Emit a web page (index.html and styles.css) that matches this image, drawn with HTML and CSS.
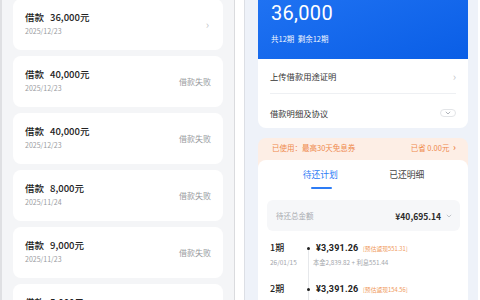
FILE: index.html
```html
<!DOCTYPE html>
<html lang="zh-CN">
<head>
    <meta charset="UTF-8">
    <meta name="viewport" content="width=device-width, initial-scale=1.0">
    <title>借款记录</title>
    <link rel="stylesheet" href="styles.css">
</head>
<body>
    <div class="screen list-screen">
        <div class="loan-list">
            <div class="loan-card">
                <div class="loan-info">
                    <div class="loan-title"><span>借款</span><span>36,000元</span></div>
                    <div class="loan-date">2025/12/23</div>
                </div>
                <span class="chevron">›</span>
            </div>
            <div class="loan-card">
                <div class="loan-info">
                    <div class="loan-title"><span>借款</span><span>40,000元</span></div>
                    <div class="loan-date">2025/12/23</div>
                </div>
                <span class="loan-status">借款失败</span>
            </div>
            <div class="loan-card">
                <div class="loan-info">
                    <div class="loan-title"><span>借款</span><span>40,000元</span></div>
                    <div class="loan-date">2025/12/23</div>
                </div>
                <span class="loan-status">借款失败</span>
            </div>
            <div class="loan-card">
                <div class="loan-info">
                    <div class="loan-title"><span>借款</span><span>8,000元</span></div>
                    <div class="loan-date">2025/11/24</div>
                </div>
                <span class="loan-status">借款失败</span>
            </div>
            <div class="loan-card">
                <div class="loan-info">
                    <div class="loan-title"><span>借款</span><span>9,000元</span></div>
                    <div class="loan-date">2025/11/23</div>
                </div>
                <span class="loan-status">借款失败</span>
            </div>
            <div class="loan-card">
                <div class="loan-info">
                    <div class="loan-title"><span>借款</span><span>5,000元</span></div>
                    <div class="loan-date">2025/11/20</div>
                </div>
                <span class="loan-status">借款失败</span>
            </div>
        </div>
    </div>

    <div class="screen detail-screen">
        <div class="summary-card">
            <div class="summary-head">
                <div class="summary-amount">36,000</div>
                <div class="summary-sub">共12期&nbsp; 剩余12期</div>
            </div>
            <div class="summary-row">
                <span>上传借款用途证明</span>
                <span class="chevron">›</span>
            </div>
            <div class="summary-row">
                <span>借款明细及协议</span>
                <span class="pill">
                    <svg width="6" height="4" viewBox="0 0 6 4"><path d="M0.8 0.8 L3 3 L5.2 0.8" fill="none" stroke="#9aa0a8" stroke-width="0.8"/></svg>
                </span>
            </div>
        </div>

        <div class="coupon-bar">
            <span>已使用：最高30天免息券</span>
            <span class="coupon-save">已省 0.00元 <b>›</b></span>
        </div>

        <div class="plan-card">
            <div class="tabs">
                <div class="tab active">待还计划</div>
                <div class="tab">已还明细</div>
            </div>
            <div class="total-box">
                <span class="total-label">待还总金额</span>
                <span class="total-value">¥40,695.14
                    <svg width="6" height="4" viewBox="0 0 6 4"><path d="M0.8 0.8 L3 3 L5.2 0.8" fill="none" stroke="#b5b9bf" stroke-width="0.8"/></svg>
                </span>
            </div>
            <div class="timeline">
                <div class="term">
                    <div class="term-left">
                        <div class="term-no">1期</div>
                        <div class="term-date">26/01/15</div>
                    </div>
                    <div class="term-axis"><i class="dot"></i></div>
                    <div class="term-right">
                        <div class="term-amount">¥3,391.26 <span class="tag">[预估返现551.31]</span></div>
                        <div class="term-detail">本金2,839.82 + 利息551.44</div>
                    </div>
                </div>
                <div class="term">
                    <div class="term-left">
                        <div class="term-no">2期</div>
                        <div class="term-date">26/02/15</div>
                    </div>
                    <div class="term-axis"><i class="dot"></i></div>
                    <div class="term-right">
                        <div class="term-amount">¥3,391.26 <span class="tag">[预估返现154.56]</span></div>
                        <div class="term-detail">本金3,236.70 + 利息154.56</div>
                    </div>
                </div>
            </div>
        </div>
    </div>
</body>
</html>
```

FILE: styles.css
```css
* {
    box-sizing: border-box;
}
body {
    margin: 0;
    width: 480px;
    height: 300px;
    overflow: hidden;
    display: flex;
    gap: 9px;
    background: #fff;
    font-family: "Noto Sans CJK SC", "Noto Sans", sans-serif;
    color: #222;
}
.screen {
    height: 300px;
    overflow: hidden;
}

/* left: loan list */
.list-screen {
    width: 235px;
    background: #f4f5f7;
    border-left: 2px solid #dfe0e3;
    border-right: 1px solid #dadbde;
    padding: 0 11px;
}
.loan-list {
    margin-top: -1px;
    display: flex;
    flex-direction: column;
    gap: 6px;
}
.loan-card {
    flex: none;
    height: 51px;
    background: #fff;
    border-radius: 8px;
    padding: 11px 12px 0 12px;
    display: flex;
    justify-content: space-between;
}
.loan-title {
    display: flex;
    gap: 6px;
    font-size: 9.5px;
    line-height: 14px;
    font-weight: 500;
    color: #222;
}
.loan-date {
    margin-top: 1px;
    font-size: 7px;
    line-height: 12px;
    color: #9a9ca0;
}
.loan-status {
    align-self: center;
    margin-top: -11px;
    font-size: 8px;
    color: #999ba0;
}
.chevron {
    color: #c4c6ca;
    font-size: 11px;
    line-height: 1;
}
.loan-card .chevron {
    align-self: center;
    margin-top: -11px;
    margin-right: 2px;
}

/* right: loan detail */
.detail-screen {
    width: 234px;
    background: #eef2f9;
    border-left: 1px solid #dcdfe5;
    padding: 0 10px 0 13px;
}
.summary-card {
    background: #fff;
    border-radius: 0 0 8px 8px;
    overflow: hidden;
}
.summary-head {
    height: 59px;
    background: linear-gradient(160deg, #1f72f2, #0a5ee6);
    color: #fff;
    padding: 2px 13px 0;
}
.summary-amount {
    font-family: "Roboto", "Noto Sans", sans-serif;
    font-size: 20px;
    line-height: 22px;
    letter-spacing: 0.3px;
}
.summary-sub {
    margin-top: 9px;
    font-size: 7.5px;
    line-height: 12px;
    opacity: 0.95;
}
.summary-row {
    margin: 0 12px;
    height: 34px;
    display: flex;
    align-items: center;
    justify-content: space-between;
    font-size: 8.3px;
    color: #333;
}
.summary-row + .summary-row {
    border-top: 1px solid #eef0f3;
    height: 35px;
    padding-top: 3px;
}
.pill {
    width: 16px;
    height: 8px;
    border: 1px solid #e3e5e8;
    border-radius: 5px;
    display: flex;
    align-items: center;
    justify-content: center;
}
.coupon-bar {
    margin-top: 10px;
    height: 30px;
    background: #fdeee5;
    border-radius: 8px 8px 0 0;
    padding: 4px 12px 0 14px;
    display: flex;
    justify-content: space-between;
    font-size: 7.5px;
    line-height: 12px;
    color: #ef8a4d;
}
.coupon-save b {
    font-size: 9px;
    margin-left: 2px;
}
.plan-card {
    margin-top: -8px;
    background: #fff;
    border-radius: 8px 8px 0 0;
    height: 160px;
    padding: 0 8px 0 9px;
}
.tabs {
    display: flex;
    padding: 0 10px;
    height: 40px;
}
.tab {
    flex: 1;
    text-align: center;
    font-size: 8.8px;
    line-height: 14px;
    padding-top: 8px;
    color: #454545;
}
.tab.active {
    color: #2d7cf5;
    position: relative;
}
.tab.active::after {
    content: "";
    position: absolute;
    left: 50%;
    top: 27px;
    width: 21px;
    height: 2px;
    margin-left: -9px;
    border-radius: 1px;
    background: #2d7cf5;
}
.total-box {
    height: 31px;
    background: #f6f7f9;
    border-radius: 6px;
    padding: 0 8px 0 9px;
    display: flex;
    align-items: center;
    justify-content: space-between;
}
.total-label {
    font-size: 7.5px;
    color: #a8abb0;
}
.total-value {
    font-size: 8.5px;
    font-weight: 600;
    color: #2a2a2a;
    display: flex;
    align-items: center;
    gap: 5px;
}
.timeline {
    padding: 10px 0 0 3px;
}
.term {
    display: flex;
    height: 41px;
}
.term-left {
    width: 35px;
}
.term-no {
    font-size: 9px;
    line-height: 14px;
    font-weight: 500;
    color: #222;
}
.term-date {
    margin-top: 1px;
    font-size: 6.5px;
    line-height: 12px;
    color: #a3a6ab;
}
.term-axis {
    width: 11px;
    position: relative;
}
.term-axis::before {
    content: "";
    position: absolute;
    left: 3px;
    top: 7px;
    bottom: -7px;
    width: 1px;
    background: #e6e8eb;
}
.dot {
    position: absolute;
    left: 2px;
    top: 6px;
    width: 3px;
    height: 3px;
    border-radius: 50%;
    background: #222;
}
.term-amount {
    font-family: "Roboto", "Noto Sans CJK SC", sans-serif;
    font-size: 9px;
    line-height: 14px;
    font-weight: 700;
    color: #222;
    letter-spacing: 0.2px;
}
.tag {
    font-family: "Noto Sans CJK SC", sans-serif;
    font-size: 5.8px;
    font-weight: 400;
    color: #ef9a5e;
    letter-spacing: 0;
    margin-left: 2px;
}
.term-detail {
    margin-top: 1px;
    margin-left: -3px;
    font-size: 6.3px;
    line-height: 12px;
    color: #a3a6ab;
}
```
